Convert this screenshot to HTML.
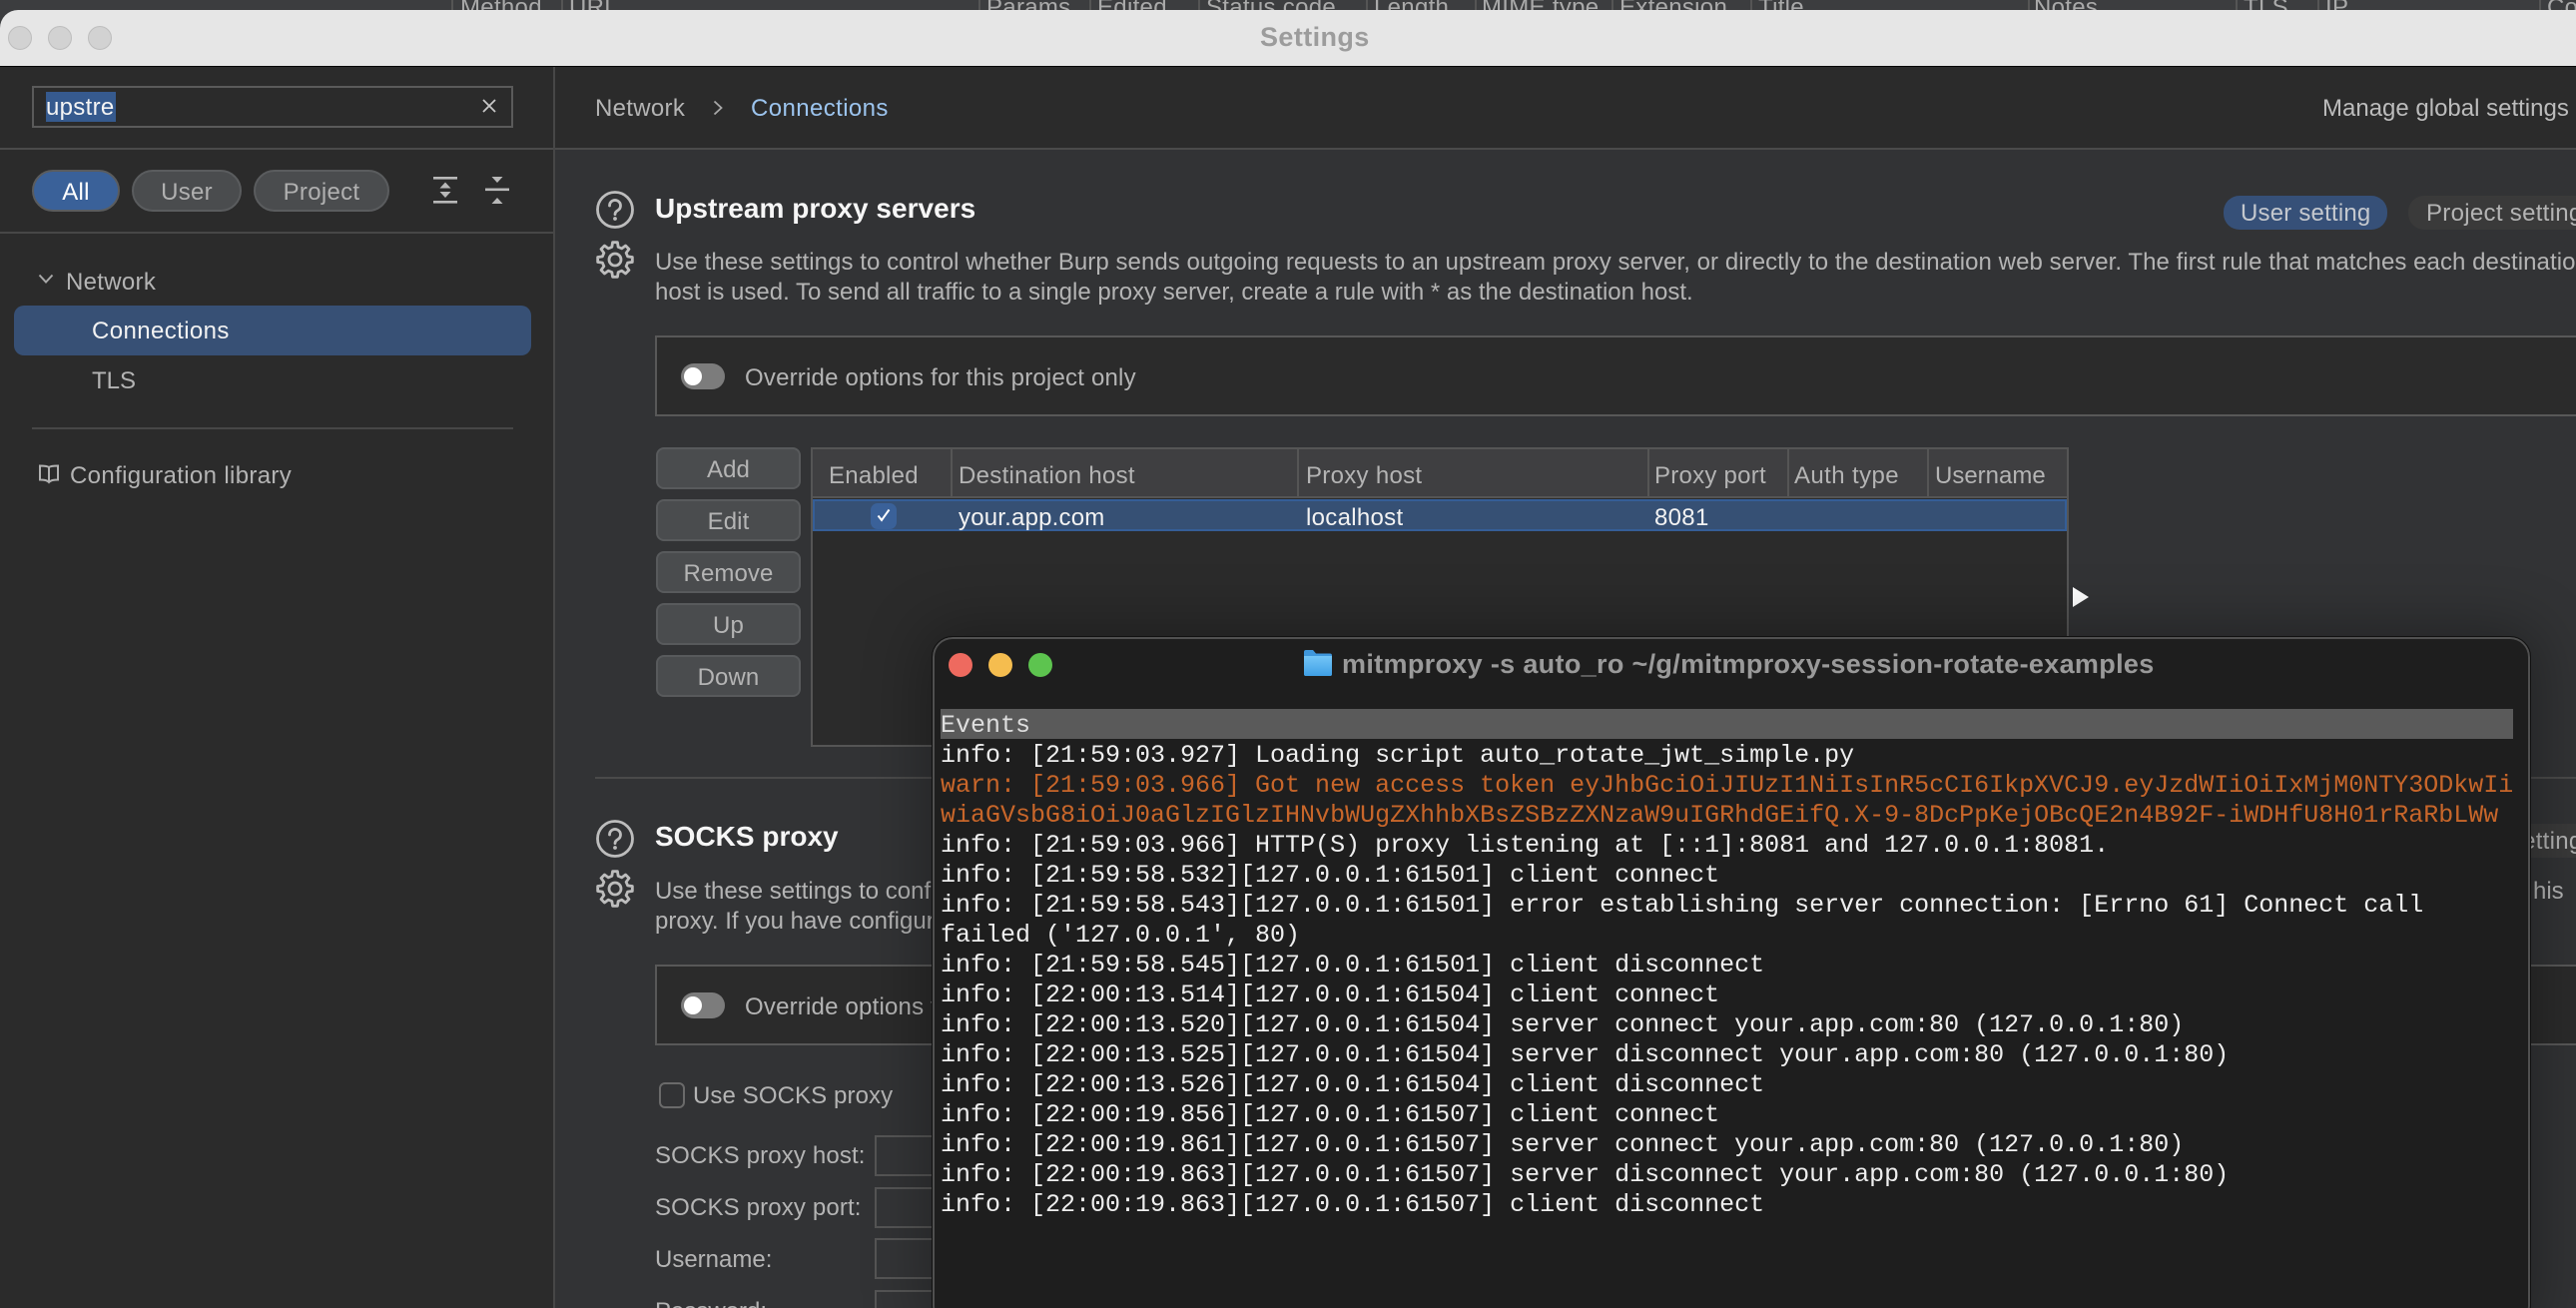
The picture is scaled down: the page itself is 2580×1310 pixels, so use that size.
<!DOCTYPE html>
<html><head><meta charset="utf-8"><title>Settings</title>
<style>
html,body{margin:0;padding:0;width:2580px;height:1310px;overflow:hidden;background:#3c3d3f}
body{position:relative;font-family:"Liberation Sans",sans-serif;font-size:24px;color:#b4b4b4;letter-spacing:.3px}
.a{position:absolute;box-sizing:border-box}
.t{position:absolute;white-space:nowrap;line-height:30px;height:30px;margin-top:2px}
.n{margin-top:0}
.z{letter-spacing:0}
.b{position:absolute;box-sizing:border-box;left:657px;width:145px;height:42px;background:#4a4c4e;border:2px solid #585a5c;border-radius:8px;text-align:center;line-height:41px;color:#b4b4b4;letter-spacing:.1px}
.p{position:absolute;box-sizing:border-box;height:42px;top:170px;border-radius:21px;border:2px solid #5a5c5e;background:#4a4c4e;text-align:center;line-height:41px;color:#b0b0b0}
.s{position:absolute;top:450px;width:2px;height:49px;background:#555}
.h{position:absolute;top:462px;white-space:nowrap;line-height:30px;color:#b4b4b4;letter-spacing:.25px}
.sh{position:absolute;top:0;line-height:16px;white-space:nowrap;color:#aaa}
.ss{position:absolute;top:0;width:2px;height:10px;background:#555}
svg{position:absolute;overflow:visible}
.m{position:absolute;left:942px;white-space:pre;font-family:"Liberation Mono",monospace;font-size:25px;line-height:30px;height:30px;letter-spacing:0;color:#eeeeee;margin-top:2px}
.w{color:#c8662a}
</style></head><body>

<!-- background table header -->
<div class="ss" style="left:452px"></div><div class="sh" style="left:461px">Method</div>
<div class="ss" style="left:562px"></div><div class="sh" style="left:570px">URL</div>
<div class="ss" style="left:980px"></div><div class="sh" style="left:988px">Params</div>
<div class="ss" style="left:1091px"></div><div class="sh" style="left:1099px">Edited</div>
<div class="ss" style="left:1200px"></div><div class="sh" style="left:1208px">Status code</div>
<div class="ss" style="left:1368px"></div><div class="sh" style="left:1376px">Length</div>
<div class="ss" style="left:1477px"></div><div class="sh" style="left:1484px">MIME type</div>
<div class="ss" style="left:1614px"></div><div class="sh" style="left:1622px">Extension</div>
<div class="ss" style="left:1753px"></div><div class="sh" style="left:1761px">Title</div>
<div class="ss" style="left:2031px"></div><div class="sh" style="left:2037px">Notes</div>
<div class="ss" style="left:2239px"></div><div class="sh" style="left:2247px">TLS</div>
<div class="ss" style="left:2321px"></div><div class="sh" style="left:2329px">IP</div>
<div class="ss" style="left:2543px"></div><div class="sh" style="left:2551px">Cookies</div>

<!-- settings window -->
<div class="a" style="left:0;top:10px;width:2580px;height:1300px;background:#323335;border-radius:18px 0 0 0;overflow:hidden">
  <div class="a" style="left:0;top:0;width:2580px;height:56px;background:#e6e6e6"></div>
  <div class="a" style="left:0;top:56px;width:2580px;height:1px;background:#000"></div>
</div>
<div class="a" style="left:8px;top:26px;width:24px;height:24px;border-radius:50%;background:#d2d2d2;border:1px solid #bdbdbd"></div>
<div class="a" style="left:48px;top:26px;width:24px;height:24px;border-radius:50%;background:#d2d2d2;border:1px solid #bdbdbd"></div>
<div class="a" style="left:88px;top:26px;width:24px;height:24px;border-radius:50%;background:#d2d2d2;border:1px solid #bdbdbd"></div>
<div class="t n" style="left:1262px;top:22px;font-weight:bold;font-size:27px;color:#9c9c9c;letter-spacing:.4px">Settings</div>

<!-- toolbar -->
<div class="a" style="left:0;top:67px;width:2580px;height:82px;background:#2b2b2b"></div>
<div class="a" style="left:0;top:148px;width:2580px;height:2px;background:#4a4a4a"></div>

<!-- sidebar -->
<div class="a" style="left:0;top:150px;width:554px;height:1160px;background:#2b2b2b"></div>
<div class="a" style="left:554px;top:67px;width:2px;height:1243px;background:#474747"></div>
<div class="a" style="left:0;top:232px;width:554px;height:2px;background:#474747"></div>

<div class="a" style="left:32px;top:86px;width:482px;height:42px;border:2px solid #5a5a5a"></div>
<div class="a" style="left:46px;top:92px;width:70px;height:30px;background:#365a8e"></div>
<div class="t" style="left:46px;top:91px;color:#f4f4f4">upstre</div>
<svg style="left:483px;top:99px" width="14" height="14" viewBox="0 0 14 14"><path d="M1 1L13 13M13 1L1 13" stroke="#c8c8c8" stroke-width="1.8" fill="none"/></svg>

<div class="p" style="left:32px;width:88px;background:#3a6199;color:#fff;border-color:#5a5c5e">All</div>
<div class="p" style="left:132px;width:110px">User</div>
<div class="p" style="left:254px;width:136px">Project</div>

<svg style="left:420px;top:165px" width="100" height="50" viewBox="0 0 100 50" fill="#b8b8b8">
  <rect x="14" y="12" width="24" height="2.6"/><rect x="14" y="36" width="24" height="2.6"/>
  <path d="M26 17.5L31.5 23.5H20.5Z"/><path d="M20.5 27H31.5L26 33Z"/>
  <rect x="66" y="23.5" width="24" height="2.6"/>
  <path d="M72.5 12H83.5L78 18Z"/><path d="M78 33L83.5 39H72.5Z"/>
</svg>

<svg style="left:38px;top:274px" width="16" height="10" viewBox="0 0 16 10"><path d="M1.5 1.5L8 8.5L14.5 1.5" stroke="#a8a8a8" stroke-width="2" fill="none"/></svg>
<div class="t" style="left:66px;top:266px">Network</div>
<div class="a" style="left:14px;top:306px;width:518px;height:50px;border-radius:10px;background:#375075"></div>
<div class="t" style="left:92px;top:315px;color:#f2f2f2;letter-spacing:.4px">Connections</div>
<div class="t" style="left:92px;top:365px;letter-spacing:0">TLS</div>
<div class="a" style="left:32px;top:428px;width:482px;height:2px;background:#474747"></div>
<svg style="left:38px;top:464px" width="22" height="22" viewBox="0 0 22 22"><path d="M11 4V19M11 4C9 2.5 5 2.5 2 2.5V16.5C5 16.5 9 16.5 11 19C13 16.5 17 16.5 20 16.5V2.5C17 2.5 13 2.5 11 4Z" stroke="#b0b0b0" stroke-width="2" fill="none"/></svg>
<div class="t" style="left:70px;top:460px;letter-spacing:.35px">Configuration library</div>

<!-- breadcrumb -->
<div class="t" style="left:596px;top:92px">Network</div>
<svg style="left:714px;top:100px" width="10" height="16" viewBox="0 0 10 16"><path d="M1.5 1.5L8.5 8L1.5 14.5" stroke="#a8a8a8" stroke-width="1.8" fill="none"/></svg>
<div class="t" style="left:752px;top:92px;color:#9cc4ee;letter-spacing:.4px">Connections</div>
<div class="t z" style="left:2326px;top:92px;color:#bcbcbc">Manage global settings</div>

<!-- Upstream -->
<svg style="left:616px;top:210px" width="1" height="1" viewBox="0 0 1 1">
  <g fill="none" stroke="#bdbdbd" stroke-width="2.8" stroke-linecap="round"><circle r="17.5"/><path d="M-5.5 -4a5.5 5.5 0 1 1 8.3 4.7c-1.9 1.1 -2.8 2.1 -2.8 3.9"/></g><circle cy="9" r="1.9" fill="#bdbdbd"/>
</svg>
<svg style="left:616px;top:260px" width="1" height="1" viewBox="0 0 1 1">
  <g fill="none" stroke="#bdbdbd" stroke-width="2.8" stroke-linejoin="round"><path d="M-2.44 -17.33L2.44 -17.33L3.15 -12.61L6.7 -11.14L10.53 -13.98L13.98 -10.53L11.14 -6.7L12.61 -3.15L17.33 -2.44L17.33 2.44L12.61 3.15L11.14 6.7L13.98 10.53L10.53 13.98L6.7 11.14L3.15 12.61L2.44 17.33L-2.44 17.33L-3.15 12.61L-6.7 11.14L-10.53 13.98L-13.98 10.53L-11.14 6.7L-12.61 3.15L-17.33 2.44L-17.33 -2.44L-12.61 -3.15L-11.14 -6.7L-13.98 -10.53L-10.53 -13.98L-6.7 -11.14L-3.15 -12.61Z"/><circle r="6"/></g>
</svg>
<div class="t n" style="left:656px;top:194px;font-weight:bold;font-size:28px;color:#f6f6f6;letter-spacing:.03px">Upstream proxy servers</div>
<div class="t" style="left:656px;top:246px;letter-spacing:.06px">Use these settings to control whether Burp sends outgoing requests to an upstream proxy server, or directly to the destination web server. The first rule that matches each destination</div>
<div class="t z" style="left:656px;top:276px">host is used. To send all traffic to a single proxy server, create a rule with * as the destination host.</div>
<div class="a" style="left:2227px;top:196px;width:164px;height:34px;border-radius:16px;background:#365078"></div>
<div class="t" style="left:2244px;top:197px;color:#c4c8ce;letter-spacing:.2px">User setting</div>
<div class="a" style="left:2412px;top:196px;width:200px;height:34px;border-radius:16px;background:#3a3a3a"></div>
<div class="t" style="left:2430px;top:197px">Project setting</div>

<div class="a" style="left:656px;top:336px;width:1960px;height:81px;border:2px solid #585858;background:#2b2b2b"></div>
<div class="a" style="left:682px;top:364px;width:44px;height:26px;border-radius:13px;background:#7c7c7c"></div>
<div class="a" style="left:685px;top:368px;width:18px;height:18px;border-radius:50%;background:#fff"></div>
<div class="t" style="left:746px;top:362px;letter-spacing:.2px">Override options for this project only</div>

<div class="b" style="top:448px">Add</div>
<div class="b" style="top:500px">Edit</div>
<div class="b" style="top:552px">Remove</div>
<div class="b" style="top:604px">Up</div>
<div class="b" style="top:656px">Down</div>

<!-- table -->
<div class="a" style="left:812px;top:448px;width:1260px;height:300px;background:#2b2b2b;border:2px solid #555"></div>
<div class="a" style="left:814px;top:450px;width:1256px;height:49px;background:#3f3f41;border-bottom:2px solid #555"></div>
<div class="s" style="left:952px"></div><div class="s" style="left:1299px"></div><div class="s" style="left:1650px"></div><div class="s" style="left:1790px"></div><div class="s" style="left:1930px"></div>
<div class="h" style="left:830px">Enabled</div>
<div class="h" style="left:960px;letter-spacing:.3px">Destination host</div>
<div class="h" style="left:1308px;letter-spacing:.3px">Proxy host</div>
<div class="h" style="left:1657px">Proxy port</div>
<div class="h" style="left:1797px;letter-spacing:.4px">Auth type</div>
<div class="h" style="left:1938px;letter-spacing:0">Username</div>
<div class="a" style="left:814px;top:500px;width:1256px;height:32px;background:#365074;border:2px solid #355e97"></div>
<div class="a" style="left:872px;top:504px;width:26px;height:26px;border-radius:7px;background:#3a6199"></div>
<svg style="left:878px;top:509px" width="14" height="14" viewBox="0 0 14 14"><path d="M1.5 7.5L5 12L12.5 1.5" stroke="#fff" stroke-width="2" fill="none"/></svg>
<div class="t" style="left:960px;top:502px;color:#f2f2f2;letter-spacing:.2px">your.app.com</div>
<div class="t" style="left:1308px;top:502px;color:#f2f2f2">localhost</div>
<div class="t" style="left:1657px;top:502px;color:#f2f2f2">8081</div>
<svg style="left:2076px;top:588px" width="16" height="20" viewBox="0 0 16 20"><path d="M0 0L16 10L0 20Z" fill="#fff"/></svg>

<!-- divider -->
<div class="a" style="left:596px;top:778px;width:1984px;height:2px;background:#4a4a4a"></div>

<!-- SOCKS -->
<svg style="left:616px;top:840px" width="1" height="1" viewBox="0 0 1 1">
  <g fill="none" stroke="#bdbdbd" stroke-width="2.8" stroke-linecap="round"><circle r="17.5"/><path d="M-5.5 -4a5.5 5.5 0 1 1 8.3 4.7c-1.9 1.1 -2.8 2.1 -2.8 3.9"/></g><circle cy="9" r="1.9" fill="#bdbdbd"/>
</svg>
<svg style="left:616px;top:890px" width="1" height="1" viewBox="0 0 1 1">
  <g fill="none" stroke="#bdbdbd" stroke-width="2.8" stroke-linejoin="round"><path d="M-2.44 -17.33L2.44 -17.33L3.15 -12.61L6.7 -11.14L10.53 -13.98L13.98 -10.53L11.14 -6.7L12.61 -3.15L17.33 -2.44L17.33 2.44L12.61 3.15L11.14 6.7L13.98 10.53L10.53 13.98L6.7 11.14L3.15 12.61L2.44 17.33L-2.44 17.33L-3.15 12.61L-6.7 11.14L-10.53 13.98L-13.98 10.53L-11.14 6.7L-12.61 3.15L-17.33 2.44L-17.33 -2.44L-12.61 -3.15L-11.14 -6.7L-13.98 -10.53L-10.53 -13.98L-6.7 -11.14L-3.15 -12.61Z"/><circle r="6"/></g>
</svg>
<div class="t n" style="left:656px;top:823px;font-weight:bold;font-size:28px;color:#f6f6f6;letter-spacing:0">SOCKS proxy</div>
<div class="t z" style="left:656px;top:876px">Use these settings to configure Burp to use a SOCKS proxy.</div>
<div class="t z" style="left:656px;top:906px">proxy. If you have configured an upstream proxy server.</div>
<div class="t" style="left:2537px;top:876px;letter-spacing:0">his</div>
<div class="a" style="left:2412px;top:825px;width:200px;height:34px;border-radius:16px;background:#3a3a3a"></div>
<div class="t" style="left:2430px;top:826px">Project setting</div>

<div class="a" style="left:656px;top:966px;width:1960px;height:81px;border:2px solid #585858;background:#2b2b2b"></div>
<div class="a" style="left:682px;top:994px;width:44px;height:26px;border-radius:13px;background:#7c7c7c"></div>
<div class="a" style="left:685px;top:998px;width:18px;height:18px;border-radius:50%;background:#fff"></div>
<div class="t" style="left:746px;top:992px;letter-spacing:.2px">Override options for this project only</div>

<div class="a" style="left:660px;top:1084px;width:26px;height:26px;border:2px solid #6a6a6a;border-radius:6px"></div>
<div class="t" style="left:694px;top:1081px;letter-spacing:.1px">Use SOCKS proxy</div>
<div class="t" style="left:656px;top:1141px;letter-spacing:.15px">SOCKS proxy host:</div>
<div class="t" style="left:656px;top:1193px;letter-spacing:.15px">SOCKS proxy port:</div>
<div class="t" style="left:656px;top:1245px;letter-spacing:0">Username:</div>
<div class="t" style="left:656px;top:1297px;letter-spacing:0">Password:</div>
<div class="a" style="left:876px;top:1137px;width:100px;height:41px;border:2px solid #555;background:#343537"></div>
<div class="a" style="left:876px;top:1189px;width:100px;height:41px;border:2px solid #555;background:#343537"></div>
<div class="a" style="left:876px;top:1240px;width:100px;height:41px;border:2px solid #555;background:#343537"></div>
<div class="a" style="left:876px;top:1292px;width:100px;height:41px;border:2px solid #555;background:#343537"></div>

<!-- terminal -->
<div class="a" style="left:934px;top:638px;width:1600px;height:690px;background:#1e1e1e;border:2px solid #505050;outline:1px solid #111;border-radius:20px;box-shadow:0 0 60px 10px rgba(0,0,0,.3)"></div>
<div class="a" style="left:950px;top:654px;width:24px;height:24px;border-radius:50%;background:#ee6a5f"></div>
<div class="a" style="left:990px;top:654px;width:24px;height:24px;border-radius:50%;background:#f5bd4f"></div>
<div class="a" style="left:1030px;top:654px;width:24px;height:24px;border-radius:50%;background:#5dc44f"></div>
<svg style="left:1306px;top:651px" width="28" height="26" viewBox="0 0 28 26"><defs><linearGradient id="f" x1="0" y1="0" x2="0" y2="1"><stop offset="0" stop-color="#74c6f7"/><stop offset="1" stop-color="#3f9fe6"/></linearGradient></defs><path d="M0 2a2 2 0 0 1 2-2h7l3 3.5h14a2 2 0 0 1 2 2V24a2 2 0 0 1-2 2H2a2 2 0 0 1-2-2Z" fill="#3f97dc"/><path d="M0 6h28V24a2 2 0 0 1-2 2H2a2 2 0 0 1-2-2Z" fill="url(#f)"/></svg>
<div class="t n" style="left:1344px;top:650px;font-weight:bold;font-size:27px;color:#9a9a9a;letter-spacing:.33px">mitmproxy -s auto_ro ~/g/mitmproxy-session-rotate-examples</div>

<div class="a" style="left:942px;top:710px;width:1575px;height:30px;background:#5a5a5a"></div>
<div class="m" style="top:710px;color:#dedede">Events</div>
<div class="m" style="top:740px">info: [21:59:03.927] Loading script auto_rotate_jwt_simple.py</div>
<div class="m w" style="top:770px">warn: [21:59:03.966] Got new access token eyJhbGciOiJIUzI1NiIsInR5cCI6IkpXVCJ9.eyJzdWIiOiIxMjM0NTY3ODkwIi</div>
<div class="m w" style="top:800px">wiaGVsbG8iOiJ0aGlzIGlzIHNvbWUgZXhhbXBsZSBzZXNzaW9uIGRhdGEifQ.X-9-8DcPpKejOBcQE2n4B92F-iWDHfU8H01rRaRbLWw</div>
<div class="m" style="top:830px">info: [21:59:03.966] HTTP(S) proxy listening at [::1]:8081 and 127.0.0.1:8081.</div>
<div class="m" style="top:860px">info: [21:59:58.532][127.0.0.1:61501] client connect</div>
<div class="m" style="top:890px">info: [21:59:58.543][127.0.0.1:61501] error establishing server connection: [Errno 61] Connect call</div>
<div class="m" style="top:920px">failed ('127.0.0.1', 80)</div>
<div class="m" style="top:950px">info: [21:59:58.545][127.0.0.1:61501] client disconnect</div>
<div class="m" style="top:980px">info: [22:00:13.514][127.0.0.1:61504] client connect</div>
<div class="m" style="top:1010px">info: [22:00:13.520][127.0.0.1:61504] server connect your.app.com:80 (127.0.0.1:80)</div>
<div class="m" style="top:1040px">info: [22:00:13.525][127.0.0.1:61504] server disconnect your.app.com:80 (127.0.0.1:80)</div>
<div class="m" style="top:1070px">info: [22:00:13.526][127.0.0.1:61504] client disconnect</div>
<div class="m" style="top:1100px">info: [22:00:19.856][127.0.0.1:61507] client connect</div>
<div class="m" style="top:1130px">info: [22:00:19.861][127.0.0.1:61507] server connect your.app.com:80 (127.0.0.1:80)</div>
<div class="m" style="top:1160px">info: [22:00:19.863][127.0.0.1:61507] server disconnect your.app.com:80 (127.0.0.1:80)</div>
<div class="m" style="top:1190px">info: [22:00:19.863][127.0.0.1:61507] client disconnect</div>

</body></html>
